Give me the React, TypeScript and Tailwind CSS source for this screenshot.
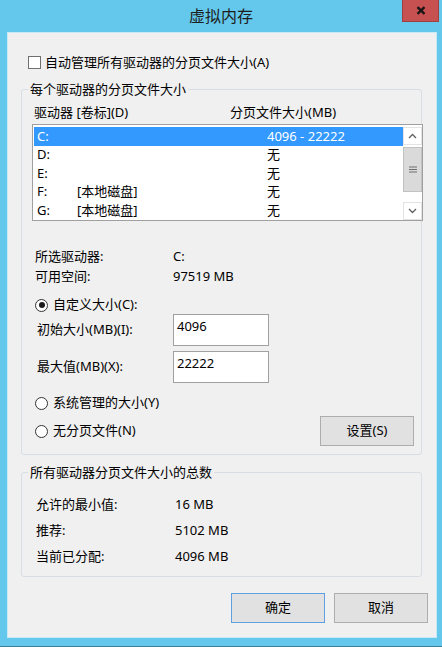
import React from "react";

const rows = [
  { d: "C:", l: "", s: "4096 - 22222", sel: true },
  { d: "D:", l: "", s: "无", sel: false },
  { d: "E:", l: "", s: "无", sel: false },
  { d: "F:", l: "[本地磁盘]", s: "无", sel: false },
  { d: "G:", l: "[本地磁盘]", s: "无", sel: false },
];

function Radio({ on }: { on?: boolean }) {
  return (
    <span className="w-[13px] h-[13px] rounded-full border border-[#333333] bg-white flex items-center justify-center shrink-0">
      {on && <span className="w-[6px] h-[6px] rounded-full bg-[#1a1a1a]" />}
    </span>
  );
}

export default function App() {
  return (
    <div className="w-[442px] h-[647px] bg-[#63c8eb] flex flex-col font-['Noto_Sans','Noto_Sans_CJK_SC',sans-serif] text-[13px] text-black overflow-hidden">
      <div className="h-[32px] shrink-0 grid grid-cols-[1fr_auto_1fr]">
        <div />
        <div className="text-[16px] leading-[32px] text-[#1e1e1e]">虚拟内存</div>
        <div className="flex justify-end pr-[3px]">
          <div className="w-[37px] h-[22px] bg-[#c75050] border-x border-b border-[#9e4040] flex items-center justify-center">
            <svg width="10" height="9" viewBox="0 0 10 9">
              <path d="M1.5 1.2 L8.5 7.8 M8.5 1.2 L1.5 7.8" stroke="#151515" strokeWidth="2.3" />
            </svg>
          </div>
        </div>
      </div>

      <div className="ml-[7px] w-[430px] h-[606px] shrink-0 bg-[#f0f0f0] border border-[#c9e9f7] flex flex-col">
        <div className="mt-[21px] ml-[20px] h-[17px] flex items-center gap-[4px] leading-[17px]">
          <span className="w-[13px] h-[13px] border border-[#707070] bg-white shrink-0" />
          <span>自动管理所有驱动器的分页文件大小(A)</span>
        </div>

        <fieldset className="mt-[10px] ml-[13px] w-[401px] border border-[#d8dee3] rounded-[3px] p-0 pb-[8px] min-w-0">
          <legend className="ml-[6px] px-[2px] leading-[17px]">每个驱动器的分页文件大小</legend>
          <div className="mt-[6px] h-[17px] pl-[12px] grid grid-cols-[196px_1fr] leading-[17px]">
            <span>驱动器 [卷标](D)</span>
            <span>分页文件大小(MB)</span>
          </div>
          <div className="mt-[3px] ml-[10px] w-[391px] h-[97px] border border-[#a0a0a0] bg-white flex">
            <div className="flex-1 pt-[2px] pl-[1px] overflow-hidden">
              {rows.map((r) => (
                <div
                  key={r.d}
                  className={
                    "h-[18.5px] pl-[3px] grid grid-cols-[40px_190px_1fr] items-center leading-[17px] " +
                    (r.sel ? "bg-[#3399ff] text-white" : "")
                  }
                >
                  <span>{r.d}</span>
                  <span>{r.l}</span>
                  <span>{r.s}</span>
                </div>
              ))}
            </div>
            <div className="w-[19px] pt-[2px] flex flex-col bg-white">
              <div className="h-[18px] border border-[#e3e3e3] bg-white flex items-center justify-center">
                <svg width="9" height="6" viewBox="0 0 9 6">
                  <path d="M1 5 L4.5 1.5 L8 5" stroke="#606060" strokeWidth="1.3" fill="none" />
                </svg>
              </div>
              <div className="mt-[2px] h-[45px] bg-[#dadada] border border-[#c2c2c2] flex items-center justify-center">
                <svg width="8" height="7" viewBox="0 0 8 7">
                  <path d="M0 1 H8 M0 3.5 H8 M0 6 H8" stroke="#6e6e6e" strokeWidth="1.2" />
                </svg>
              </div>
              <div className="flex-1" />
              <div className="h-[18px] border border-[#e3e3e3] bg-white flex items-center justify-center">
                <svg width="9" height="6" viewBox="0 0 9 6">
                  <path d="M1 1 L4.5 4.5 L8 1" stroke="#606060" strokeWidth="1.3" fill="none" />
                </svg>
              </div>
            </div>
          </div>

          <div className="mt-[25px] pl-[13px] grid grid-cols-[138px_1fr] leading-[20px]">
            <span>所选驱动器:</span>
            <span>C:</span>
            <span>可用空间:</span>
            <span>97519 MB</span>
          </div>

          <div className="mt-[10px] h-[18px] pl-[13px] flex items-center gap-[5px]">
            <Radio on />
            <span>自定义大小(C):</span>
          </div>

          <div className="pl-[15px] grid grid-cols-[136px_96px] items-center">
            <span>初始大小(MB)(I):</span>
            <div className="h-[32px] border border-[#a0a0a0] bg-white pl-[3px] pt-[3px] leading-[17px]">4096</div>
          </div>
          <div className="mt-[5px] pl-[15px] grid grid-cols-[136px_96px] items-center">
            <span>最大值(MB)(X):</span>
            <div className="h-[32px] border border-[#a0a0a0] bg-white pl-[3px] pt-[3px] leading-[17px]">22222</div>
          </div>

          <div className="mt-[11px] h-[18px] pl-[13px] flex items-center gap-[5px]">
            <Radio />
            <span>系统管理的大小(Y)</span>
          </div>

          <div className="mt-[4px] h-[30px] pl-[13px] pr-[7px] flex items-center justify-between">
            <div className="flex items-center gap-[5px]">
              <Radio />
              <span>无分页文件(N)</span>
            </div>
            <div className="w-[94px] h-[30px] border border-[#adadad] bg-[#e1e1e1] flex items-center justify-center">
              设置(S)
            </div>
          </div>
        </fieldset>

        <fieldset className="mt-[9px] ml-[13px] w-[401px] border border-[#d8dee3] rounded-[3px] p-0 pt-[11px] pb-[6px] min-w-0">
          <legend className="ml-[6px] px-[2px] leading-[17px]">所有驱动器分页文件大小的总数</legend>
          <div className="pl-[14px] grid grid-cols-[139px_1fr] auto-rows-[26px] items-center">
            <span>允许的最小值:</span>
            <span>16 MB</span>
            <span>推荐:</span>
            <span>5102 MB</span>
            <span>当前已分配:</span>
            <span>4096 MB</span>
          </div>
        </fieldset>

        <div className="mt-[16px] pr-[8px] flex justify-end gap-[9px]">
          <div className="w-[94px] h-[30px] border border-[#5fa1e0] bg-[#e1e1e1] flex items-center justify-center">确定</div>
          <div className="w-[94px] h-[30px] border border-[#adadad] bg-[#e1e1e1] flex items-center justify-center">取消</div>
        </div>
      </div>
      <div className="flex-1" />
      <div className="h-[1px] shrink-0 bg-[#3f7f96]" />
    </div>
  );
}
